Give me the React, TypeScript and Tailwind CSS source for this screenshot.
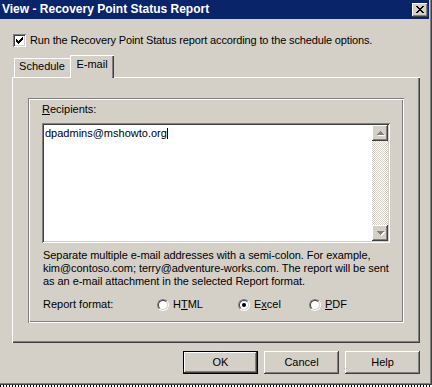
import React from "react";

// classic 3D borders
const raised =
  "shadow-[inset_-1px_-1px_#404040,inset_1px_1px_#ffffff,inset_-2px_-2px_#808080]";
const sunken =
  "shadow-[inset_1px_1px_#808080,inset_-1px_-1px_#ffffff,inset_2px_2px_#404040,inset_-2px_-2px_#d4d0c8]";

// tiny pixel-art drawings for the glyphs of the old widgets
const Pixels = ({
  rows,
  color,
  shadow,
}: {
  rows: string[];
  color: string;
  shadow?: string;
}) => {
  const w = rows[0].length;
  const h = rows.length;
  const cells: React.ReactNode[] = [];
  rows.forEach((row, y) =>
    row.split("").forEach((c, x) => {
      if (c === "X") {
        if (shadow)
          cells.push(
            <rect key={`s${x}-${y}`} x={x + 1} y={y + 1} width={1} height={1} fill={shadow} />
          );
      }
    })
  );
  rows.forEach((row, y) =>
    row.split("").forEach((c, x) => {
      if (c === "X")
        cells.push(<rect key={`${x}-${y}`} x={x} y={y} width={1} height={1} fill={color} />);
    })
  );
  const sw = shadow ? w + 1 : w;
  const sh = shadow ? h + 1 : h;
  return (
    <svg width={sw} height={sh} viewBox={`0 0 ${sw} ${sh}`} shapeRendering="crispEdges">
      {cells}
    </svg>
  );
};

const closeX = [
  "XX....XX",
  ".XX..XX.",
  "..XXXX..",
  "...XX...",
  "..XXXX..",
  ".XX..XX.",
  "XX....XX",
];

const check = [
  "......X",
  ".....XX",
  "X...XXX",
  "XX.XXX.",
  "XXXXX..",
  ".XXX...",
  "..X....",
];

const arrowUp = ["...X...", "..XXX..", ".XXXXX.", "XXXXXXX"];
const arrowDown = ["XXXXXXX", ".XXXXX.", "..XXX..", "...X..."];

const Radio = ({ checked }: { checked?: boolean }) => (
  <div className="w-[12px] h-[12px] rounded-full border border-t-[#808080] border-l-[#808080] border-r-white border-b-white shrink-0">
    <div className="w-full h-full rounded-full border border-t-[#404040] border-l-[#404040] border-r-[#d4d0c8] border-b-[#d4d0c8] bg-white flex items-center justify-center">
      {checked && <div className="w-[4px] h-[4px] rounded-full bg-black" />}
    </div>
  </div>
);

const Button = ({ label, isDefault }: { label: string; isDefault?: boolean }) => (
  <button
    className={`w-[75px] h-[23px] bg-[#d4d0c8] flex items-center justify-center ${
      isDefault
        ? "shadow-[inset_0_0_0_1px_#000000,inset_-2px_-2px_#404040,inset_2px_2px_#ffffff,inset_-3px_-3px_#808080]"
        : raised
    }`}
  >
    {label}
  </button>
);

export default function App() {
  return (
    <div className="w-[432px] h-[387px] bg-white font-['Liberation_Sans',Arial,sans-serif] text-[11px] leading-[13px] text-black select-none overflow-hidden whitespace-nowrap">
      <div className="h-[385px] w-[432px] bg-[#d4d0c8] flex flex-col shadow-[inset_-1px_-1px_#404040,inset_-2px_-2px_#808080]">
        {/* title bar */}
        <div className="h-[19px] w-[429px] bg-[#0a246a] flex items-center justify-between pl-[2px] pr-[1px]">
          <span className="text-white font-bold text-[12px] leading-[19px]">
            View - Recovery Point Status Report
          </span>
          <div className={`w-[16px] h-[14px] bg-[#d4d0c8] flex items-center justify-center ${raised}`}>
            <div className="-mt-[1px] -ml-[1px]">
              <Pixels rows={closeX} color="#000000" />
            </div>
          </div>
        </div>

        {/* schedule checkbox */}
        <div className="mt-[15px] ml-[13px] flex items-center gap-[4px] h-[13px]">
          <div className={`w-[13px] h-[13px] bg-white flex items-center justify-center ${sunken}`}>
            <Pixels rows={check} color="#000000" />
          </div>
          <span className="tracking-[-0.14px]">
            Run the Recovery Point Status report according to the schedule options.
          </span>
        </div>

        {/* tabs */}
        <div className="mt-[8px] ml-[14px] h-[22px] flex items-end">
          <div className="w-[56px] h-[19px] pt-[2px] text-center shadow-[inset_1px_1px_#ffffff]">
            Schedule
          </div>
          <div className="relative z-10 w-[44px] h-[23px] -mb-[1px] pt-[3px] text-center bg-[#d4d0c8] shadow-[inset_1px_1px_#ffffff,inset_-1px_0_#404040,inset_-2px_0_#808080]">
            E-mail
          </div>
        </div>

        {/* tab panel */}
        <div className="ml-[12px] w-[408px] h-[266px] pl-[16px] pt-[21px] shadow-[inset_1px_1px_#ffffff,inset_-1px_-1px_#404040,inset_-2px_-2px_#808080]">
          <div className="w-[376px] h-[225px] px-[14px] pt-[5px] shadow-[inset_1px_1px_#808080,inset_-1px_-1px_#ffffff,inset_2px_2px_#ffffff,inset_-2px_-2px_#808080]">
            <div className="h-[13px]">
              <span className="underline underline-offset-[1px]">R</span>ecipients:
            </div>

            <div className={`mt-[7px] w-[348px] h-[120px] bg-white p-[2px] flex ${sunken}`}>
              <div className="flex-1 pl-[1px] pt-[2px]">
                dpadmins@mshowto.org
                <span className="inline-block w-[1px] h-[11px] bg-black align-[-2px]" />
              </div>
              <div className="w-[16px] flex flex-col">
                <div className={`h-[16px] bg-[#d4d0c8] flex items-center justify-center pl-[1px] ${raised}`}>
                  <Pixels rows={arrowUp} color="#808080" shadow="#ffffff" />
                </div>
                <div className="flex-1 bg-[repeating-conic-gradient(#d4d0c8_0_25%,#ffffff_0_50%)] bg-[length:2px_2px]" />
                <div className={`h-[16px] bg-[#d4d0c8] flex items-center justify-center pl-[1px] ${raised}`}>
                  <Pixels rows={arrowDown} color="#808080" shadow="#ffffff" />
                </div>
              </div>
            </div>

            <p className="mt-[6px] pl-[1px] tracking-[-0.05px]">
              Separate multiple e-mail addresses with a semi-colon. For example,
              <br />
              kim@contoso.com; terry@adventure-works.com. The report will be sent
              <br />
              as an e-mail attachment in the selected Report format.
            </p>

            <div className="mt-[10px] h-[13px] flex items-center">
              <span className="w-[115px] pl-[1px]">Report format:</span>
              <div className="w-[81px] flex items-center gap-[4px]">
                <Radio />
                <span>
                  H<span className="underline underline-offset-[1px]">T</span>ML
                </span>
              </div>
              <div className="w-[71px] flex items-center gap-[4px]">
                <Radio checked />
                <span>
                  E<span className="underline underline-offset-[1px]">x</span>cel
                </span>
              </div>
              <div className="flex items-center gap-[4px]">
                <Radio />
                <span>
                  <span className="underline underline-offset-[1px]">P</span>DF
                </span>
              </div>
            </div>
          </div>
        </div>

        {/* dialog buttons */}
        <div className="mt-[8px] ml-[12px] w-[408px] flex justify-end gap-[6px]">
          <Button label="OK" isDefault />
          <Button label="Cancel" />
          <Button label="Help" />
        </div>
      </div>
      <div className="h-[2px] w-full bg-[repeating-linear-gradient(90deg,#000000_0_1px,#ffffff_1px_3px)]" />
    </div>
  );
}
